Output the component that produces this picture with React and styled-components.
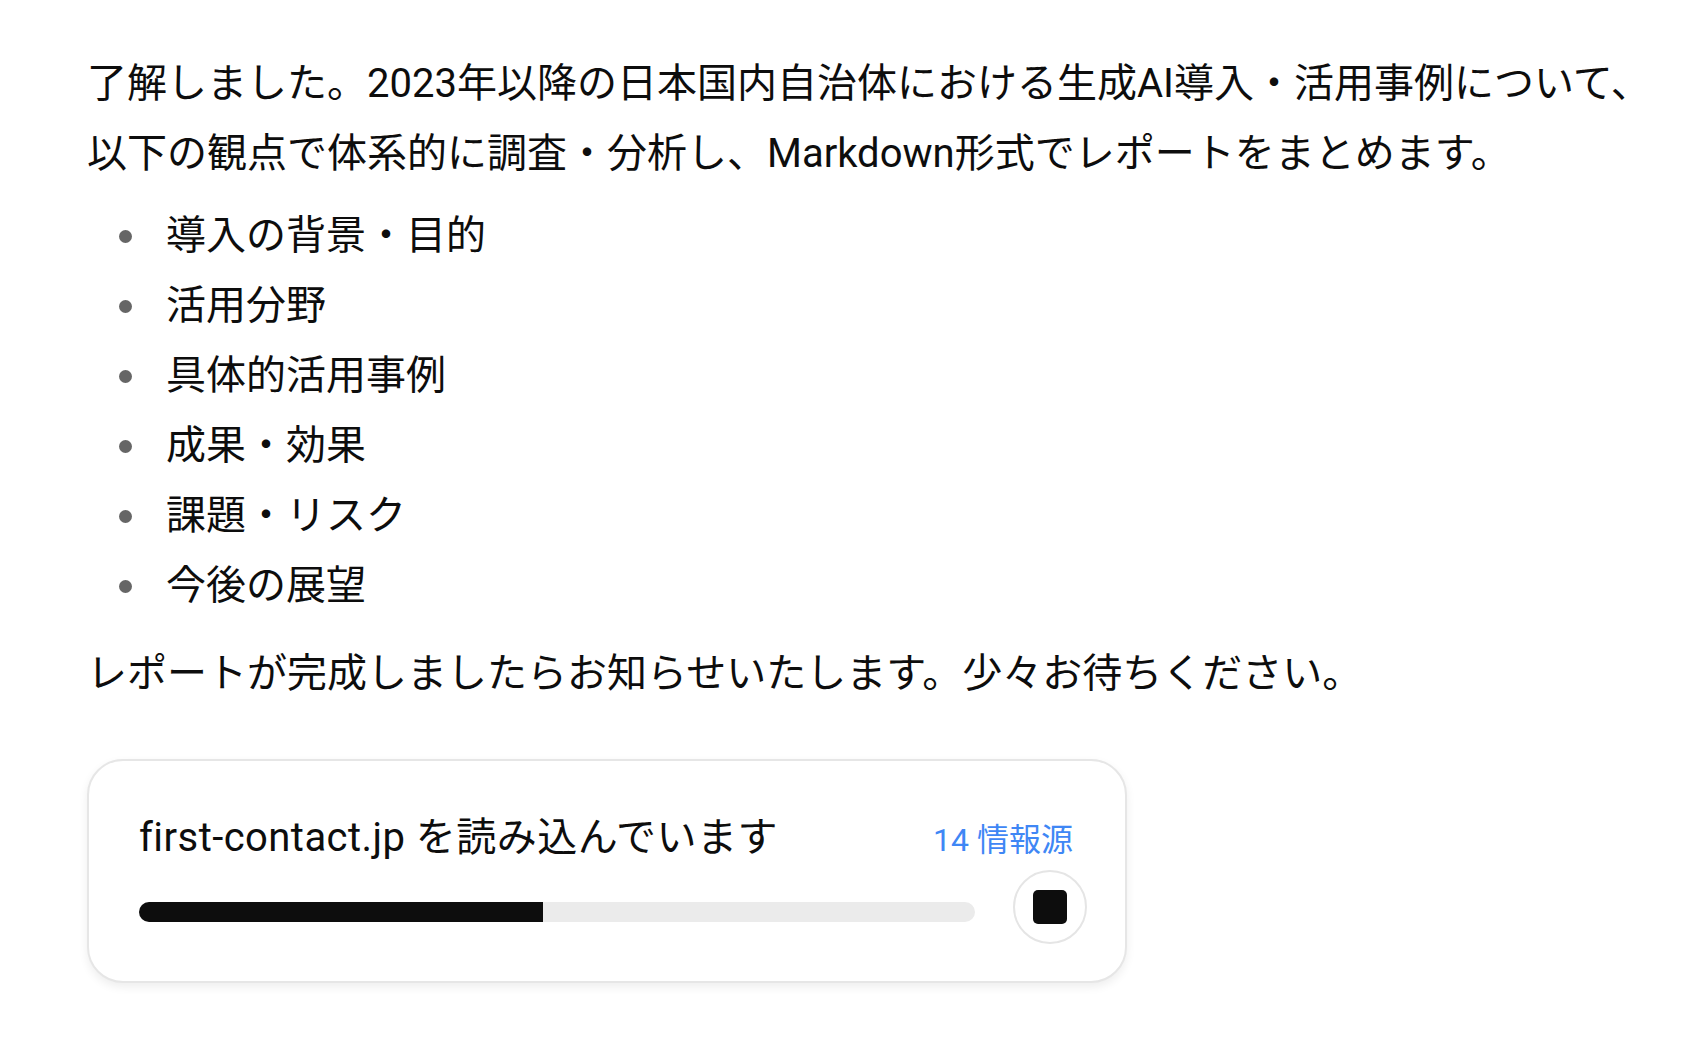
import React from "react";
import styled, { createGlobalStyle } from "styled-components";

const GlobalStyle = createGlobalStyle`
  html, body {
    margin: 0;
    padding: 0;
    background: #ffffff;
  }
  body {
    font-family: "Roboto", "Noto Sans CJK JP", sans-serif;
    color: #0d0d0d;
  }
`;

const Page = styled.main`
  box-sizing: border-box;
  width: 1698px;
  padding: 49px 8px 40px 87px;
  font-size: 40px;
  line-height: 70px;
`;

const Paragraph = styled.p`
  margin: 0;
`;

const List = styled.ul`
  list-style: none;
  margin: ${(p) => p.$top}px 0 ${(p) => p.$bottom}px;
  padding: 0;
`;

const Item = styled.li`
  display: flex;
  align-items: center;
  height: 70px;
`;

const Dot = styled.span`
  flex: none;
  width: 13px;
  height: 13px;
  border-radius: 50%;
  background: #666666;
  margin: 0 34px 0 32px;
`;

const Card = styled.section`
  box-sizing: border-box;
  width: 1040px;
  margin-top: 50px;
  padding: 53px 38px 37px 50px;
  border: 2px solid #e6e6e6;
  border-radius: 36px;
  background: #ffffff;
  box-shadow: 0 4px 10px rgba(0, 0, 0, 0.07);
`;

const Header = styled.div`
  display: flex;
  justify-content: space-between;
  align-items: baseline;
  padding-right: 14px;
`;

const Title = styled.span`
  font-size: 40px;
  line-height: 48px;
  letter-spacing: 0.45px;
  color: #0d0d0d;
`;

const Sources = styled.span`
  font-size: 32px;
  line-height: 48px;
  color: #3f87f5;
`;

const Row = styled.div`
  display: flex;
  align-items: flex-start;
  gap: 38px;
  margin-top: 6px;
`;

const Track = styled.div`
  flex: 1;
  height: 20px;
  margin-top: 32px;
  border-radius: 10px;
  background: #ebebeb;
  overflow: hidden;
`;

const Fill = styled.div`
  height: 100%;
  background: #0d0d0d;
`;

const StopButton = styled.button`
  flex: none;
  box-sizing: border-box;
  width: 74px;
  height: 74px;
  padding: 0;
  border: 2px solid #e5e5e5;
  border-radius: 50%;
  background: #ffffff;
  display: grid;
  place-items: center;
  cursor: pointer;
`;

const StopSquare = styled.span`
  width: 34px;
  height: 34px;
  border-radius: 5px;
  background: #0d0d0d;
`;

const items = [
  "導入の背景・目的",
  "活用分野",
  "具体的活用事例",
  "成果・効果",
  "課題・リスク",
  "今後の展望",
];

export default function App() {
  const progress = 48.3;
  return (
    <>
      <GlobalStyle />
      <Page>
        <Paragraph>
          了解しました。2023年以降の日本国内自治体における生成AI導入・活用事例について、以下の観点で体系的に調査・分析し、Markdown形式でレポートをまとめます。
        </Paragraph>
        <List $top={12} $bottom={18}>
          {items.map((t) => (
            <Item key={t}>
              <Dot />
              <span>{t}</span>
            </Item>
          ))}
        </List>
        <Paragraph>
          レポートが完成しましたらお知らせいたします。少々お待ちください。
        </Paragraph>
        <Card>
          <Header>
            <Title>first-contact.jp を読み込んでいます</Title>
            <Sources>14 情報源</Sources>
          </Header>
          <Row>
            <Track>
              <Fill style={{ width: `${progress}%` }} />
            </Track>
            <StopButton aria-label="停止">
              <StopSquare />
            </StopButton>
          </Row>
        </Card>
      </Page>
    </>
  );
}
